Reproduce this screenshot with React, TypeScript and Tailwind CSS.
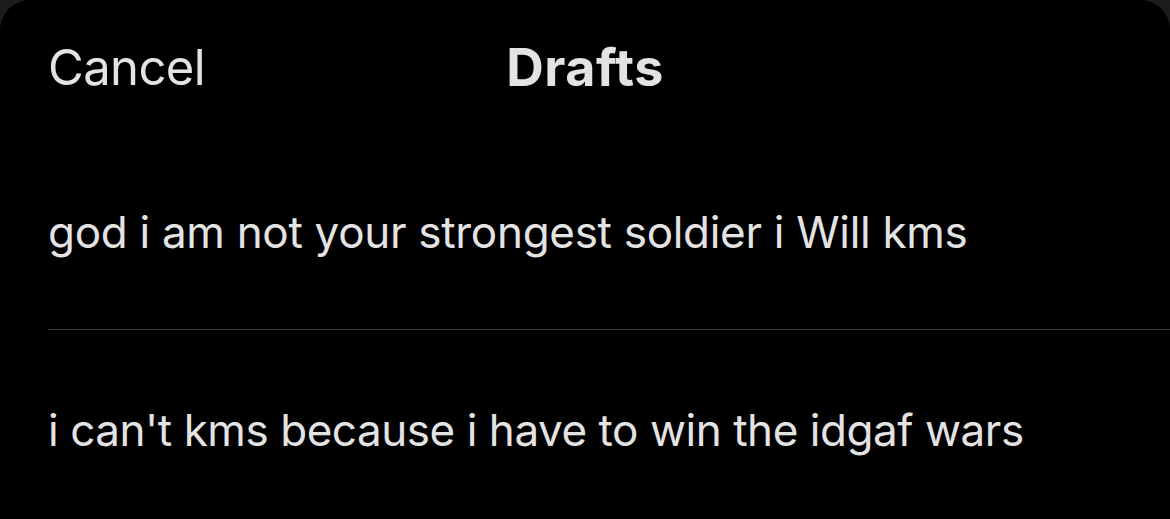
export default function App() {
  const drafts = [
    "god i am not your strongest soldier i Will kms",
    "i can't kms because i have to win the idgaf wars",
  ];

  return (
    <div
      className="h-[519px] w-[1170px] overflow-hidden bg-[#1c1c1e]"
      style={{ fontFamily: "Inter, 'Noto Sans', sans-serif" }}
    >
      <div className="h-full rounded-t-[30px] bg-black text-[#e3e3e3]">
        <header className="relative flex h-[135px] items-center px-[48px]">
          <span className="text-[49px] tracking-[-0.6px]">Cancel</span>
          <h1 className="absolute left-1/2 -translate-x-1/2 text-[52px] font-bold tracking-[0.5px]">
            Drafts
          </h1>
        </header>
        <ul>
          <li className="pl-[48px]">
            <div className="flex h-[195px] items-center border-b border-[#3a3a3c] text-[44px] tracking-[-0.3px]">
              {drafts[0]}
            </div>
          </li>
          <li className="pl-[48px]">
            <div className="flex h-[200px] items-center text-[44px] tracking-[-0.45px]">
              {drafts[1]}
            </div>
          </li>
        </ul>
      </div>
    </div>
  );
}
